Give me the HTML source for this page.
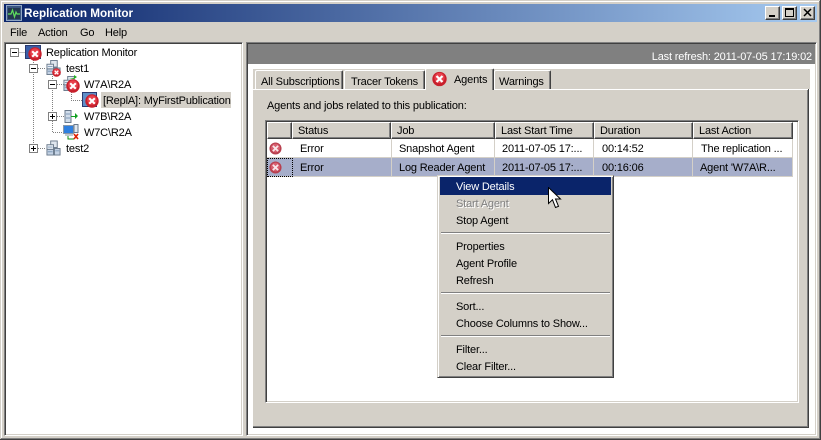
<!DOCTYPE html>
<html><head><meta charset="utf-8"><style>
html,body{margin:0;padding:0;background:#d4d0c8}
#w{position:relative;width:821px;height:440px;overflow:hidden;background:#d4d0c8;font:11px/13px "Liberation Sans",sans-serif;color:#000}
.b,.t,svg.a{position:absolute}
.t{white-space:nowrap;height:13px;line-height:13px;margin-top:1px;letter-spacing:-0.16px}
.r{box-sizing:border-box}
.sunk{box-sizing:border-box;border-top:1px solid #808080;border-left:1px solid #808080;border-right:1px solid #fff;border-bottom:1px solid #fff;box-shadow:inset 1px 1px 0 #404040,inset -1px -1px 0 #d4d0c8;background:#fff}
.h{position:absolute;box-sizing:border-box;background:#d4d0c8;border-top:1px solid #fff;border-left:1px solid #fff;border-right:1px solid #404040;border-bottom:1px solid #404040;box-shadow:inset -1px -1px 0 #808080}
.btn{position:absolute;top:6px;width:15px;height:14px;box-sizing:border-box;background:#d4d0c8;border-top:1px solid #fff;border-left:1px solid #fff;border-right:1px solid #404040;border-bottom:1px solid #404040;box-shadow:inset -1px -1px 0 #808080}
.exp{position:absolute;width:9px;height:9px;box-sizing:border-box;border:1px solid #808080;background:#fff}
.exp i{position:absolute;left:1px;top:3px;width:5px;height:1px;background:#000}
.exp u{position:absolute;left:3px;top:1px;width:1px;height:5px;background:#000}
.tab{position:absolute;box-sizing:border-box;background:#d4d0c8;border-top:1px solid #fff;border-left:1px solid #fff;border-right:1px solid #404040;box-shadow:inset -1px 0 0 #808080;border-radius:2px 2px 0 0}
.sep{position:absolute;left:441px;width:169px;height:2px;background:linear-gradient(#808080 50%,#fff 50%)}
</style></head><body><div id="w">

<svg width="0" height="0" style="position:absolute"><defs>
<symbol id="err" viewBox="0 0 14 14"><circle cx="7" cy="7" r="6.7" fill="#c8202c"/><circle cx="7" cy="6" r="4.8" fill="#e8404c"/><path d="M4.2 4.2L9.8 9.8M9.8 4.2L4.2 9.8" stroke="#fff" stroke-width="2.1"/></symbol>
<symbol id="errl" viewBox="0 0 14 14"><circle cx="7" cy="7" r="6.5" fill="#b8404f"/><circle cx="7" cy="6.5" r="4.8" fill="#d86070"/><path d="M4.2 4.2L9.8 9.8M9.8 4.2L4.2 9.8" stroke="#f8e8ea" stroke-width="2"/></symbol>
<symbol id="srv" viewBox="0 0 16 16"><rect x="5" y="0.5" width="7" height="7" fill="#dfe6ee" stroke="#6a7a8c"/><rect x="1" y="4.5" width="7" height="5" fill="#e8edf4" stroke="#6a7a8c"/><rect x="1" y="9.5" width="7" height="6" fill="#c4d2e4" stroke="#6a7a8c"/><rect x="9" y="8.5" width="6" height="7" fill="#c4d2e4" stroke="#6a7a8c"/><path d="M2 7h5M2 12h5M10 11h4" stroke="#7f9ab8"/></symbol>
</defs></svg>

<!-- window frame -->
<div class="b" style="left:0;top:0;width:821px;height:1px;background:#d4d0c8"></div>
<div class="b" style="left:1px;top:1px;width:819px;height:1px;background:#fff"></div>
<div class="b" style="left:1px;top:1px;width:1px;height:437px;background:#fff"></div>
<div class="b" style="left:819px;top:1px;width:1px;height:438px;background:#808080"></div>
<div class="b" style="left:820px;top:0;width:1px;height:440px;background:#404040"></div>
<div class="b" style="left:1px;top:438px;width:819px;height:1px;background:#808080"></div>
<div class="b" style="left:0;top:439px;width:821px;height:1px;background:#404040"></div>

<!-- title bar -->
<div class="b" style="left:4px;top:4px;width:813px;height:18px;background:linear-gradient(90deg,#0a246a,#a6caf0)"></div>
<svg class="a" style="left:6px;top:5px" width="16" height="16" viewBox="0 0 16 16"><rect x="0.5" y="0.5" width="15" height="15" fill="#3a5580" stroke="#8fa5c4"/><rect x="2" y="3" width="12" height="11" fill="#24384f"/><path d="M2 9h3l1.5-4 2 7 1.5-5 1 2h3" fill="none" stroke="#5fe05f" stroke-width="1.2"/></svg>
<div class="t" style="left:24px;top:6px;color:#fff;font-weight:bold;font-size:11.7px;letter-spacing:0">Replication Monitor</div>
<div class="btn" style="left:765px"></div><div class="b" style="left:769px;top:15px;width:6px;height:2px;background:#000"></div>
<div class="btn" style="left:782px"></div><div class="b r" style="left:785px;top:8px;width:9px;height:9px;border:1px solid #000;border-top-width:2px"></div>
<div class="btn" style="left:800px"></div><svg class="a" style="left:803px;top:8px" width="9" height="9" viewBox="0 0 9 9"><path d="M1 1L8 8M8 1L1 8" stroke="#000" stroke-width="1.5"/></svg>

<!-- menu -->
<div class="t" style="left:10px;top:26px">File</div>
<div class="t" style="left:38px;top:26px">Action</div>
<div class="t" style="left:80px;top:26px">Go</div>
<div class="t" style="left:105px;top:26px">Help</div>

<!-- tree pane -->
<div class="b sunk" style="left:4px;top:42px;width:239px;height:394px"></div>

<svg class="a" style="left:0;top:0" width="250" height="170">
<g stroke="#808080" stroke-dasharray="1 1" fill="none">
<path d="M19.5 52.5H26M33.5 60V143M38 68.5H46M52.5 76V111M57 84.5H64M71.5 92V100.5H83M57 116.5H64M52.5 121V132.5H64M38 148.5H46"/>
</g></svg>
<div class="exp" style="left:10px;top:48px"><i></i></div>
<div class="exp" style="left:29px;top:64px"><i></i></div>
<div class="exp" style="left:48px;top:80px"><i></i></div>
<div class="exp" style="left:48px;top:112px"><i></i><u></u></div>
<div class="exp" style="left:29px;top:144px"><i></i><u></u></div>

<!-- tree icons -->
<div class="b r" style="left:25px;top:45px;width:16px;height:14px;background:#3a5fa8;border:1px solid #2a3a70"></div>
<svg class="a" style="left:28px;top:47px" width="14" height="14"><use href="#err" width="14" height="14"/></svg>
<svg class="a" style="left:46px;top:60px" width="15" height="15"><use href="#srv" width="15" height="15"/></svg>
<svg class="a" style="left:52px;top:68px" width="9" height="9"><use href="#err" width="9" height="9"/></svg>
<svg class="a" style="left:63px;top:76px" width="15" height="15"><use href="#srv" width="15" height="15"/></svg>
<svg class="a" style="left:69px;top:74px" width="8" height="6"><path d="M0 4h5V1l3 2-3 2" fill="#20b020"/></svg>
<svg class="a" style="left:66px;top:79px" width="14" height="14"><use href="#err" width="14" height="14"/></svg>
<div class="b r" style="left:82px;top:92px;width:15px;height:15px;background:#5f8fc8;border:1px solid #2a3a70"></div>
<svg class="a" style="left:85px;top:94px" width="14" height="14"><use href="#err" width="14" height="14"/></svg>
<svg class="a" style="left:64px;top:109px" width="14" height="15" viewBox="0 0 14 15"><rect x="1" y="1.5" width="6" height="12" fill="#d0dcea" stroke="#6a7a8c"/><path d="M2 5h4M2 9h4" stroke="#7f9ab8"/><path d="M7 7h4V4l3 3-3 3V8H7z" fill="#10a020"/></svg>
<svg class="a" style="left:63px;top:124px" width="16" height="16" viewBox="0 0 16 16"><rect x="0.5" y="1.5" width="10" height="8" fill="#2f80e0" stroke="#8a98a8"/><rect x="2" y="10" width="8" height="2" fill="#c0c8d0"/><rect x="11" y="0.5" width="4" height="8" fill="#e0e8f0" stroke="#6a7a8c"/><path d="M5 12v3h6" stroke="#109010" fill="none"/><path d="M11 10L15 15M15 10L11 15" stroke="#e02000" stroke-width="1.6"/></svg>
<svg class="a" style="left:46px;top:140px" width="15" height="16"><use href="#srv" width="15" height="16"/></svg>

<div class="t" style="left:46px;top:46px">Replication Monitor</div>
<div class="t" style="left:66px;top:62px">test1</div>
<div class="t" style="left:84px;top:78px">W7A\R2A</div>
<div class="b" style="left:101px;top:92px;width:130px;height:16px;background:#d4d0c8"></div>
<div class="t" style="left:103px;top:94px">[ReplA]: MyFirstPublication</div>
<div class="t" style="left:84px;top:110px">W7B\R2A</div>
<div class="t" style="left:84px;top:126px">W7C\R2A</div>
<div class="t" style="left:66px;top:142px">test2</div>

<!-- right pane -->
<div class="b sunk" style="left:246px;top:42px;width:571px;height:394px"></div>
<div class="b" style="left:248px;top:44px;width:567px;height:20px;background:#808080"></div>
<div class="t" style="right:9px;top:50px;color:#fff">Last refresh: 2011-07-05 17:19:02</div>

<div class="b" style="left:253px;top:69px;width:557px;height:20px;background:#d4d0c8"></div>
<div class="b" style="left:253px;top:89px;width:556px;height:339px;background:#d4d0c8"></div>
<div class="b" style="left:253px;top:89px;width:556px;height:1px;background:#fff"></div>
<div class="b" style="left:807px;top:90px;width:1px;height:338px;background:#808080"></div>
<div class="b" style="left:808px;top:89px;width:1px;height:339px;background:#404040"></div>
<div class="b" style="left:253px;top:426px;width:555px;height:1px;background:#808080"></div>
<div class="b" style="left:253px;top:427px;width:556px;height:1px;background:#404040"></div>

<!-- tabs -->
<div class="tab" style="left:255px;top:70px;width:88px;height:19px"></div>
<div class="t" style="left:261px;top:75px">All Subscriptions</div>
<div class="tab" style="left:344px;top:70px;width:81px;height:19px"></div>
<div class="t" style="left:351px;top:75px">Tracer Tokens</div>
<div class="tab" style="left:425px;top:68px;width:69px;height:22px;z-index:1"></div>
<svg class="a" style="left:432px;top:71px;z-index:2" width="15" height="16"><use href="#err" width="15" height="16"/></svg>
<div class="t" style="left:454px;top:73px;z-index:2">Agents</div>
<div class="tab" style="left:494px;top:70px;width:57px;height:19px"></div>
<div class="t" style="left:499px;top:75px">Warnings</div>

<div class="t" style="left:267px;top:99px">Agents and jobs related to this publication:</div>

<!-- list -->
<div class="b sunk" style="left:265px;top:120px;width:534px;height:283px"></div>
<div class="h" style="left:267px;width:25px;top:122px;height:17px"></div>
<div class="h" style="left:292px;width:99px;top:122px;height:17px"></div>
<div class="h" style="left:391px;width:104px;top:122px;height:17px"></div>
<div class="h" style="left:495px;width:99px;top:122px;height:17px"></div>
<div class="h" style="left:594px;width:99px;top:122px;height:17px"></div>
<div class="h" style="left:693px;width:100px;top:122px;height:17px"></div>
<div class="t" style="left:298px;top:124px">Status</div>
<div class="t" style="left:397px;top:124px">Job</div>
<div class="t" style="left:501px;top:124px">Last Start Time</div>
<div class="t" style="left:600px;top:124px">Duration</div>
<div class="t" style="left:699px;top:124px">Last Action</div>

<div class="b" style="left:267px;top:157px;width:525px;height:1px;background:#d4d0c8"></div>
<div class="b" style="left:267px;top:158px;width:525px;height:19px;background:#a6aeca"></div>
<div class="b" style="left:267px;top:176px;width:525px;height:1px;background:#d4d0c8"></div>
<div class="b" style="left:391px;top:139px;width:1px;height:38px;background:#d4d0c8"></div>
<div class="b" style="left:494px;top:139px;width:1px;height:38px;background:#d4d0c8"></div>
<div class="b" style="left:593px;top:139px;width:1px;height:38px;background:#d4d0c8"></div>
<div class="b" style="left:692px;top:139px;width:1px;height:38px;background:#d4d0c8"></div>
<div class="b" style="left:792px;top:139px;width:1px;height:38px;background:#d4d0c8"></div>
<div class="b r" style="left:267px;top:158px;width:26px;height:19px;border:1px dotted #000"></div>
<svg class="a" style="left:269px;top:142px" width="13" height="13"><use href="#errl" width="13" height="13"/></svg>
<svg class="a" style="left:269px;top:161px" width="13" height="13"><use href="#errl" width="13" height="13"/></svg>

<div class="t" style="left:300px;top:142px">Error</div>
<div class="t" style="left:399px;top:142px">Snapshot Agent</div>
<div class="t" style="left:502px;top:142px">2011-07-05 17:...</div>
<div class="t" style="left:602px;top:142px">00:14:52</div>
<div class="t" style="left:701px;top:142px">The replication ...</div>
<div class="t" style="left:300px;top:161px">Error</div>
<div class="t" style="left:399px;top:161px">Log Reader Agent</div>
<div class="t" style="left:502px;top:161px">2011-07-05 17:...</div>
<div class="t" style="left:602px;top:161px">00:16:06</div>
<div class="t" style="left:700px;top:161px">Agent 'W7A\R...</div>

<!-- context menu -->
<div class="b r" style="left:437px;top:175px;width:177px;height:203px;background:#d4d0c8;border-top:1px solid #d4d0c8;border-left:1px solid #d4d0c8;border-right:1px solid #404040;border-bottom:1px solid #404040;box-shadow:inset 1px 1px 0 #fff,inset -1px -1px 0 #808080"></div>
<div class="b" style="left:440px;top:177px;width:171px;height:18px;background:#0a246a"></div>
<div class="t" style="left:456px;top:180px;color:#fff">View Details</div>
<div class="t" style="left:456px;top:197px;color:#808080;text-shadow:1px 1px 0 #fff">Start Agent</div>
<div class="t" style="left:456px;top:214px">Stop Agent</div>
<div class="sep" style="top:232px"></div>
<div class="t" style="left:456px;top:240px">Properties</div>
<div class="t" style="left:456px;top:257px">Agent Profile</div>
<div class="t" style="left:456px;top:274px">Refresh</div>
<div class="sep" style="top:292px"></div>
<div class="t" style="left:456px;top:300px">Sort...</div>
<div class="t" style="left:456px;top:317px">Choose Columns to Show...</div>
<div class="sep" style="top:335px"></div>
<div class="t" style="left:456px;top:343px">Filter...</div>
<div class="t" style="left:456px;top:360px">Clear Filter...</div>

<!-- cursor -->
<svg class="a" style="left:548px;top:187px" width="14" height="22" viewBox="0 0 14 22"><path d="M0.5 0.5V16.5L4.5 12.8L7.5 20.5L10.5 19.3L7.5 12H12.5Z" fill="#fff" stroke="#000"/></svg>

</div></body></html>
